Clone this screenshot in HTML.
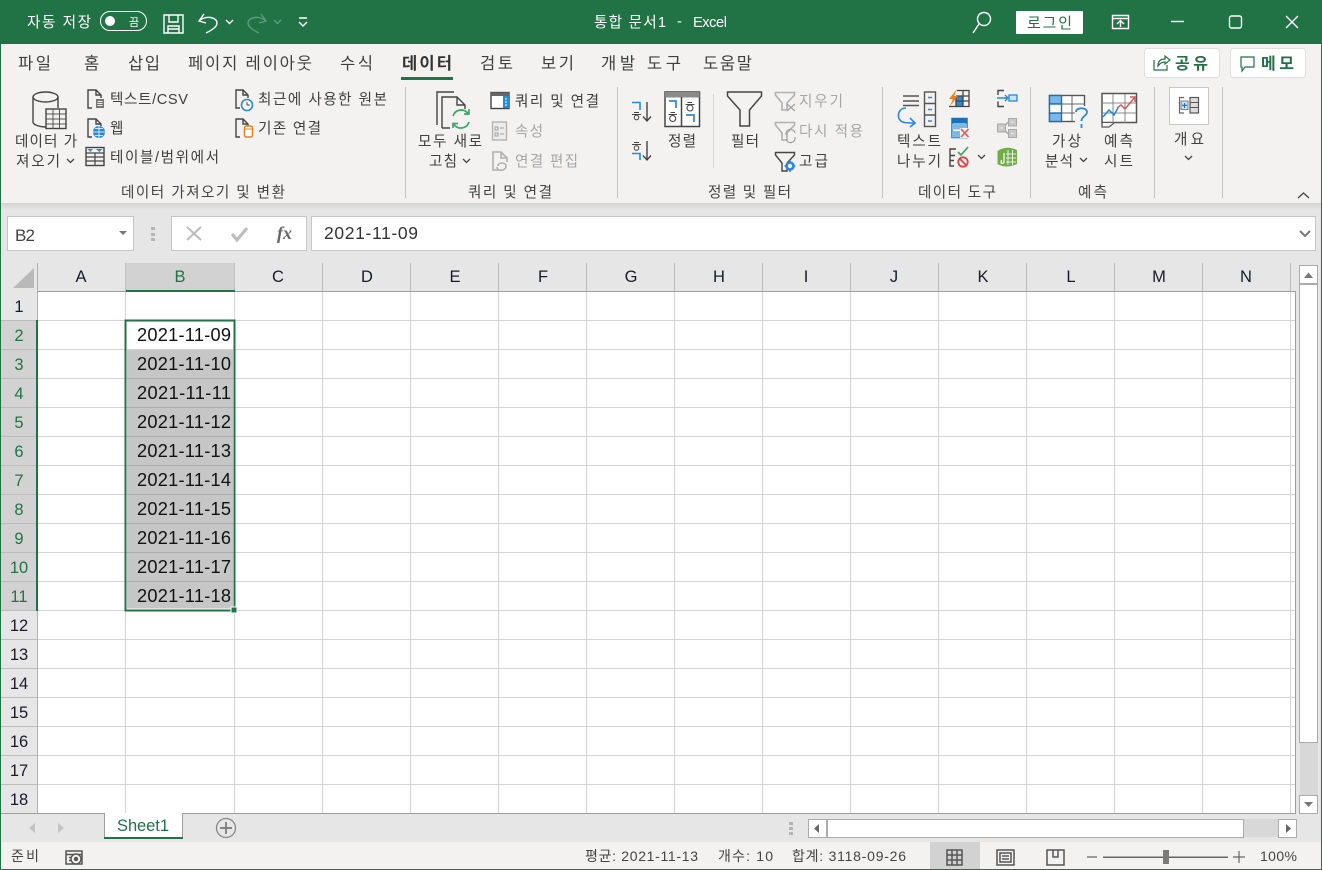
<!DOCTYPE html>
<html lang="ko"><head><meta charset="utf-8"><title>통합 문서1 - Excel</title>
<style>
html,body{margin:0;padding:0;width:1322px;height:870px;overflow:hidden;background:#e6e6e6}
svg{display:block}
text{font-family:"Liberation Sans","Noto Sans CJK KR",sans-serif;font-size:14.6px;fill:#444}
.w text{fill:#fff}
.r text{fill:#404040}
.g text{fill:#a6a6a6}
.gl text{fill:#444;font-size:14.6px}
.tab text{font-size:16.6px;fill:#404040}
.cell text{font-size:18.2px;fill:#111}
.h text{font-size:16.5px;fill:#1a1a2a;text-anchor:middle}
.hs text{font-size:16.5px;fill:#217346;text-anchor:middle}
.s text{font-size:14px;fill:#444}
.i{fill:none;stroke:#444;stroke-width:1.4}
.b{fill:none;stroke:#2b88d8;stroke-width:1.6}
.ig{fill:none;stroke:#b0b0b0;stroke-width:1.6}
</style></head><body>
<svg width="1322" height="870" viewBox="0 0 1322 870" xmlns="http://www.w3.org/2000/svg">
<defs><linearGradient id="sh" x1="0" y1="0" x2="0" y2="1"><stop offset="0" stop-color="#d4d4d4"/><stop offset="1" stop-color="#e6e6e6"/></linearGradient></defs>
<rect width="1322" height="870" fill="#e6e6e6"/>
<!-- title bar -->
<rect width="1322" height="44" fill="#217346"/>
<rect y="44" width="1322" height="159" fill="#f3f2f1"/>
<rect y="203" width="1322" height="7" fill="url(#sh)"/>
<g class="w">
<text x="27" y="27" textLength="64">자동 저장</text>
<text x="129" y="26" style="font-size:11px">끔</text>
<text x="594" y="27" textLength="72">통합 문서1</text>
<text x="677" y="26">-</text>
<text x="693" y="27" textLength="34">Excel</text>
</g>
<rect x="100.500" y="11.500" width="46" height="19" rx="9.500" fill="none" stroke="#fff"/>
<circle cx="110" cy="21" r="5" fill="#fff"/>
<g fill="none" stroke="#fff" stroke-width="1.400">
<path d="M164 15H183V33H164ZM169 15V22H178V15M168 33V26H179V33M168 29H179"/>
<path d="M204 14L199 21L206 23M199 21C206 15 217 17 217 23C217 27 212 30 206 33"/>
<path d="M226 20l3.500 3.500L233 20"/>
<path d="M299 18H307M299 22l4 4 4-4"/>
<circle cx="984" cy="19" r="6.500"/><path d="M979 24L973 33"/>
<path d="M1112.500 15.500H1128.500V28.500H1112.500ZM1112.500 18.500H1128.500M1120.500 27V21M1117 24l3.500-3.500 3.500 3.500"/>
<path d="M1171 21.500H1184"/>
<rect x="1229.500" y="16" width="12" height="12" rx="2"/>
<path d="M1286 16L1298 28M1298 16L1286 28"/>
</g>
<g fill="none" stroke="#5c9b7c" stroke-width="1.400">
<path d="M261 14L266 21L259 23M266 21C259 15 248 17 248 23C248 27 253 30 259 33"/>
<path d="M274 20l3.500 3.500 3.500-3.500"/>
</g>
<rect x="1016" y="11" width="67" height="23" rx="1" fill="#fff"/>
<text x="1027" y="28" textLength="45" style="fill:#217346;font-size:15px">로그인</text>
<!-- tabs -->
<g class="tab">
<text x="18" y="69" textLength="33">파일</text>
<text x="84" y="69" textLength="16">홈</text>
<text x="128" y="69" textLength="32">삽입</text>
<text x="188" y="69" textLength="124">페이지 레이아웃</text>
<text x="340" y="69" textLength="33">수식</text>
<text x="402" y="69" textLength="50" style="font-weight:700;fill:#333">데이터</text>
<text x="480" y="69" textLength="33">검토</text>
<text x="541" y="69" textLength="33">보기</text>
<text x="601" y="69" textLength="80">개발 도구</text>
<text x="703" y="69" textLength="49">도움말</text>
</g>
<rect x="401" y="77" width="52" height="3" fill="#217346"/>
<rect x="1144.500" y="48.500" width="75" height="29" rx="3" fill="#fff" stroke="#e1dfdd"/>
<rect x="1230.500" y="48.500" width="75" height="29" rx="3" fill="#fff" stroke="#e1dfdd"/>
<text x="1175" y="69" textLength="33" style="font-size:16px;font-weight:700;fill:#217346">공유</text>
<text x="1261" y="69" textLength="33" style="font-size:16px;font-weight:700;fill:#217346">메모</text>
<g fill="none" stroke="#217346" stroke-width="1.200">
<path d="M1154 60V70H1167V65M1158 66C1158 61 1161 59 1165 59V56L1170 60L1165 64V62C1162 62 1160 63 1158 66Z"/>
<path d="M1241 57H1254V67H1245L1242 71V67H1241Z"/>
</g>
<!-- ribbon dividers -->
<g fill="#c4c4c4">
<rect x="405" y="87" width="1" height="111"/><rect x="617" y="87" width="1" height="111"/>
<rect x="882" y="87" width="1" height="111"/><rect x="1030" y="87" width="1" height="111"/>
<rect x="1154" y="87" width="1" height="111"/><rect x="1222" y="87" width="1" height="111"/>
<rect x="713" y="94" width="1" height="74" fill="#d6d6d6"/>
</g>
<!-- ribbon text -->
<g class="r">
<text x="15" y="146" textLength="62">데이터 가</text>
<text x="16" y="166" textLength="44">져오기</text>
<text x="110" y="104" textLength="78">텍스트/CSV</text>
<text x="110" y="133" textLength="14">웹</text>
<text x="110" y="162" textLength="109">테이블/범위에서</text>
<text x="258" y="104" textLength="129">최근에 사용한 원본</text>
<text x="258" y="133" textLength="63">기존 연결</text>
<text x="418" y="146" textLength="64">모두 새로</text>
<text x="429" y="166" textLength="28">고침</text>
<text x="515" y="106" textLength="84">쿼리 및 연결</text>
<text x="668" y="146" textLength="28">정렬</text>
<text x="731" y="146" textLength="28">필터</text>
<text x="799" y="166" textLength="29">고급</text>
<text x="897" y="146" textLength="44">텍스트</text>
<text x="897" y="166" textLength="44">나누기</text>
<text x="1052" y="146" textLength="29">가상</text>
<text x="1045" y="166" textLength="28">분석</text>
<text x="1104" y="146" textLength="29">예측</text>
<text x="1104" y="166" textLength="29">시트</text>
<text x="1174" y="144" textLength="30">개요</text>
</g>
<g class="g">
<text x="515" y="136" textLength="28">속성</text>
<text x="515" y="166" textLength="63">연결 편집</text>
<text x="799" y="106" textLength="44">지우기</text>
<text x="799" y="136" textLength="64">다시 적용</text>
</g>
<g class="gl">
<text x="121" y="197" textLength="164">데이터 가져오기 및 변환</text>
<text x="468" y="197" textLength="84">쿼리 및 연결</text>
<text x="708" y="197" textLength="83">정렬 및 필터</text>
<text x="918" y="197" textLength="78">데이터 도구</text>
<text x="1078" y="197" textLength="29">예측</text>
</g>
<!-- chevrons -->
<g fill="none" stroke="#444" stroke-width="1.300">
<path d="M67 159l3.500 3.500 3.500-3.500M463 159l3.500 3.500 3.500-3.500M978 155l3.500 3.500 3.500-3.500M1080 158l3.500 3.500 3.500-3.500M1185 156l3.500 3.500 3.500-3.500"/>
<path d="M1298 198l5.500-5 5.500 5"/>
</g>
<!-- database -->
<g class="i">
<path d="M33 97V122C33 125 40 127 46 127M58 97V108"/>
<ellipse cx="45.500" cy="97" rx="12.500" ry="5"/>
</g>
<rect x="46" y="109" width="20" height="19.500" fill="#f3f2f1" stroke="#444" stroke-width="1.400"/>
<path d="M46 114H66M46 119H66M46 124H66M53 109V128M59.500 109V128" stroke="#555" fill="none"/>
<!-- doc icons -->
<g class="i">
<path d="M92 108H88V90H96L101 95V98M96 90V95H101"/>
<path d="M92 137H88V119H96L101 124V126M96 119V124H101"/>
<path d="M240 108H236V90H243L248 95V98M243 90V95H248"/>
<path d="M240 137H236V119H243L248 124V126M243 119V124H248"/>
</g>
<rect x="96" y="99" width="8" height="9" fill="#777"/>
<path d="M97.500 101.500H102.500M97.500 103.500H102.500M97.500 105.500H102.500" stroke="#eee"/>
<circle cx="99" cy="132" r="6" fill="#2b88d8"/>
<path d="M93 132H105M99 126V138M95 128.500H103M95 135.500H103" stroke="#fff" stroke-width=".8" fill="none"/>
<circle cx="247" cy="105" r="5.500" fill="#fff" stroke="#2b88d8" stroke-width="1.600"/>
<path d="M247 102V105H250" stroke="#444" fill="none"/>
<rect x="244.500" y="126" width="8" height="11" rx="2" fill="#fff" stroke="#e67e22" stroke-width="1.500"/>
<path d="M244.500 129H252.500" stroke="#e67e22"/>
<!-- table -->
<rect x="86" y="147.500" width="18" height="18" fill="#f3f2f1" stroke="#444" stroke-width="1.400"/>
<path d="M87.500 149H93L90.300 152ZM96 149H102.500L99.300 152Z" fill="#2b88d8"/>
<path d="M86 153H104M86 157H104M86 161H104M95 153V165.500" stroke="#444" stroke-width="1.200"/>
<!-- refresh -->
<g class="i">
<path d="M437 125V92H454"/>
<path d="M442 128V97H457L465 105V109M457 97V105H465M442 128H450"/>
</g>
<g fill="none" stroke="#3aa864" stroke-width="1.700">
<path d="M453 116A8.500 8.500 0 0 1 468 113.500M469 122A8.500 8.500 0 0 1 454 124.500"/>
<path d="M469 109V114H464M453 128V123.500H458"/>
</g>
<!-- query panel -->
<rect x="491" y="92.500" width="18" height="16" fill="#fff" stroke="#444" stroke-width="1.400"/>
<rect x="491" y="92.500" width="18" height="3.500" fill="#666"/>
<rect x="503" y="96" width="6" height="12" fill="#2b88d8"/>
<path d="M505 99H507M505 102H507M505 105H507" stroke="#fff"/>
<rect x="492.500" y="122" width="14" height="18" fill="#ececec" stroke="#b0b0b0" stroke-width="1.300"/>
<path d="M495 127H498V130H495ZM495 133H498V136H495ZM500 128H504M500 134H504" stroke="#a0a0a0" fill="none"/>
<g class="ig">
<path d="M498 170H493V152H501L507 158V162M501 152V158H507"/>
<path d="M498 166C498 162 506 162 506 166C506 171 497 172 497 167"/>
</g>
<!-- sort -->
<g fill="none" stroke="#444" stroke-width="1.400">
<path d="M647 102V121M643 116.500L647 121L651 116.500"/>
<path d="M647 141V160M643 155.500L647 160L651 155.500"/>
</g>
<path d="M632 102.500H640V110M632 153.500H640V160" fill="none" stroke="#2b88d8" stroke-width="1.600"/>
<g fill="none" stroke="#444" stroke-width="1">
<path d="M634 112.500H639M632 114.500H641"/><circle cx="636.500" cy="117.500" r="2.300"/>
<path d="M634 142.500H639M632 144.500H641"/><circle cx="636.500" cy="148" r="2.300"/>
</g>
<rect x="665" y="92" width="34.500" height="34.500" fill="#fff" stroke="#444" stroke-width="1.500"/>
<rect x="665" y="92" width="34.500" height="5.500" fill="#8a8a8a"/>
<path d="M681.500 97V126" stroke="#444" stroke-width="1.500"/>
<path d="M669 101H676V108M686 115H694V122" fill="none" stroke="#2b88d8" stroke-width="1.700"/>
<g fill="none" stroke="#444" stroke-width="1.100">
<path d="M670.500 112.500H675M668.500 114.500H677"/><circle cx="672.700" cy="118.500" r="3"/>
<path d="M687.500 102.500H692M685.500 104.500H694.500"/><circle cx="690" cy="108" r="3"/>
</g>
<!-- filters -->
<path d="M727.500 92H761.500V96L749.500 110V126H740V110L727.500 96Z" fill="none" stroke="#444" stroke-width="1.500"/>
<g class="ig">
<path d="M775.500 92.500H794.500V95L787 103V110H782V103L775.500 95Z"/>
<path d="M775.500 122.500H794.500V125L787 133V140H782V133L775.500 125Z"/>
<path d="M787 104L795 111M795 104L787 111" stroke="#a0a0a0" stroke-width="1.200"/>
<path d="M786 135A4.500 4.500 0 0 1 795 133M795 137A4.500 4.500 0 0 1 786 139" stroke="#a0a0a0" stroke-width="1.200"/>
</g>
<path d="M775.500 152.500H794.500V155L787 163V171H782V163L775.500 155Z" fill="#f3f2f1" stroke="#444" stroke-width="1.400"/>
<circle cx="790" cy="166" r="3.500" fill="#f3f2f1" stroke="#2b88d8" stroke-width="2.600"/>
<path d="M790 160V162M790 170V172M784.500 166H786.500M793.500 166H795.500" stroke="#2b88d8" stroke-width="1.600"/>
<!-- text to columns -->
<g fill="none" stroke="#555" stroke-width="1.400">
<path d="M903 96H919M903 101H919M903 105.500H919"/>
<rect x="924.500" y="92" width="11" height="34.500"/>
<path d="M924.500 103.500H935.500M924.500 115H935.500"/>
</g>
<path d="M928 97.500H932M928 109.500H932M928 121H932" stroke="#2b88d8" stroke-width="1.600"/>
<path d="M906 108C898 108 897 117 900 120C902 123 907 123 914 123M910 118L915 123L910 127" class="b"/>
<!-- flash fill etc -->
<rect x="956" y="96" width="7" height="10" fill="#2b88d8"/>
<g fill="none" stroke="#444" stroke-width="1.300">
<path d="M949 106.500H969V90.500H957M963 90.500V106.500M956 101H969M956 96H969M956 96V106.500"/>
</g>
<path d="M957 89L949 99H953L950 106L958 96H954Z" fill="#e67e22"/>
<rect x="952" y="118.500" width="15" height="19" fill="#fff" stroke="#1e6fb5" stroke-width="1.500"/>
<rect x="952" y="118.500" width="15" height="5" fill="#1e6fb5"/>
<rect x="952" y="124" width="15" height="5.500" fill="#7ab8e8"/>
<rect x="952" y="131" width="8" height="6.500" fill="#7ab8e8"/>
<rect x="960" y="128" width="9" height="10" fill="#f3f2f1"/>
<path d="M961 129L968.500 137M968.500 129L961 137" stroke="#e25555" stroke-width="1.600"/>
<path d="M956 149H950V155.500H955M950 155.500V166H954M950 160.500H954" fill="none" stroke="#444" stroke-width="1.400"/>
<path d="M958 152L961 155L968 147" fill="none" stroke="#3aa864" stroke-width="1.700"/>
<circle cx="963" cy="162" r="4.700" fill="#fff" stroke="#e04040" stroke-width="1.800"/>
<path d="M960 159L966 165" stroke="#e04040" stroke-width="1.800"/>
<!-- consolidate -->
<path d="M1004 90.500H998V95M998 101.500V106.500H1004" fill="none" stroke="#444" stroke-width="1.400"/>
<path d="M997 98H1008M1005 95L1008 98L1005 101" fill="none" stroke="#2b88d8" stroke-width="1.400"/>
<rect x="1009" y="95" width="8" height="6" fill="#cde3f5" stroke="#2b88d8" stroke-width="1.300"/>
<path d="M1005 126L1008 122M1005 130L1008 134" fill="none" stroke="#aaa" stroke-width="1.400"/>
<rect x="997.500" y="124" width="8" height="8" fill="#c8c8c8" stroke="#a8a8a8"/><rect x="1008.500" y="118.500" width="8" height="7.500" fill="#c8c8c8" stroke="#a8a8a8"/><rect x="1008.500" y="129.500" width="8" height="8" fill="#c8c8c8" stroke="#a8a8a8"/>
<path d="M1000 128H1003M1011 122H1014M1011 133.500H1014" stroke="#eee"/>
<path d="M997.500 151Q1006 145 1017 150V164Q1006 169 997.500 164Z" fill="#70ad47"/>
<path d="M1008 150V165M1012.500 150V165M1006 154H1016M1006 158H1016M1006 162H1016" stroke="#e8f3df" fill="none"/>
<path d="M1004 153V162M1004 162A1.500 1.500 0 1 1 1002 160.500" stroke="#fff" stroke-width="1.200" fill="none"/>
<!-- what-if -->
<rect x="1049.500" y="95.500" width="35" height="26" fill="#fff" stroke="#555" stroke-width="1.400"/>
<rect x="1049.500" y="95.500" width="12" height="8.500" fill="#7ab8e8" stroke="#1e6fb5" stroke-width="1.400"/>
<rect x="1049.500" y="113" width="12" height="8.500" fill="#7ab8e8" stroke="#1e6fb5" stroke-width="1.400"/>
<rect x="1049.500" y="104" width="12" height="9" fill="#fff" stroke="#1e6fb5" stroke-width="1.400"/>
<path d="M1072 95.500V121.500M1061.500 104H1084.500M1061.500 113H1084.500" stroke="#666" fill="none"/>
<rect x="1075" y="106" width="13" height="23" fill="#f3f2f1"/>
<path d="M1076 112C1076 107 1087 107 1087 112C1087 116 1081.500 116 1081.500 121M1081.500 124V128" fill="none" stroke="#2b88d8" stroke-width="1.800"/>
<!-- forecast -->
<rect x="1102" y="93.500" width="34.500" height="29" fill="#fff" stroke="#555" stroke-width="1.500"/>
<path d="M1102 103H1136M1102 113H1136M1113 94V123M1125 94V123" stroke="#888"/>
<path d="M1117 108L1121 105L1125 109L1135 97M1130 97H1135V102" fill="none" stroke="#e25555" stroke-width="1.500"/>
<path d="M1103 117L1109 110L1114 115L1118 108" fill="none" stroke="#2b88d8" stroke-width="1.600"/>
<path d="M1102 123V127H1109L1114 123" fill="#fff" stroke="#555" stroke-width="1.300"/>
<!-- outline button -->
<rect x="1169.500" y="87.500" width="39" height="37" fill="#fff" stroke="#c8c8c8"/>
<path d="M1184 97.500H1179.500V113H1184" fill="none" stroke="#666" stroke-width="1.200"/>
<rect x="1181" y="101" width="7" height="8.500" fill="#cde3f5" stroke="#666" stroke-width=".8"/>
<path d="M1184.500 103V108M1182 105.300H1187" stroke="#1e6fb5" stroke-width="1.200"/>
<rect x="1190" y="97.500" width="8.500" height="15.500" fill="#ddd" stroke="#555" stroke-width="1.200"/>
<path d="M1190 102.500H1198.500M1190 107.500H1198.500" stroke="#555"/>
<!-- formula bar -->
<rect x="7.500" y="216.500" width="126" height="34" fill="#fff" stroke="#c6c6c6"/>
<rect x="171.500" y="216.500" width="135" height="34" fill="#fff" stroke="#c6c6c6"/>
<rect x="311.500" y="216.500" width="1004" height="34" fill="#fff" stroke="#c6c6c6"/>
<text x="15" y="241" textLength="20" style="font-size:17px">B2</text>
<path d="M119 231H127L123 235Z" fill="#777"/>
<path d="M151 227H155V230H151ZM151 233H155V236H151ZM151 238H155V241H151Z" fill="#b5b5b5"/>
<path d="M187 227L201 240M201 227L187 240" stroke="#bdbdbd" stroke-width="2" fill="none"/>
<path d="M232 234L237 240L247 228" stroke="#bdbdbd" stroke-width="3" fill="none"/>
<text x="277" y="239" style="font-family:'Liberation Serif',serif;font-style:italic;font-weight:700;font-size:18px;fill:#666">fx</text>
<text x="324" y="239" textLength="94" style="font-size:17.500px;fill:#333">2021-11-09</text>
<path d="M1300 231L1305 236L1310 231" fill="none" stroke="#777" stroke-width="2"/>
<!-- sheet -->
<rect x="37" y="292" width="1258" height="521" fill="#fff"/>
<rect x="126" y="263" width="109" height="28" fill="#d2d2d2"/>
<rect x="1" y="321" width="36" height="290" fill="#d2d2d2"/>
<path d="M34 268V288H13Z" fill="#b9b9b9"/>
<g fill="#d4d4d4">
<rect x="125" y="292" width="1" height="521"/><rect x="234" y="292" width="1" height="521"/><rect x="322" y="292" width="1" height="521"/><rect x="410" y="292" width="1" height="521"/><rect x="498" y="292" width="1" height="521"/><rect x="586" y="292" width="1" height="521"/><rect x="674" y="292" width="1" height="521"/><rect x="762" y="292" width="1" height="521"/><rect x="850" y="292" width="1" height="521"/><rect x="938" y="292" width="1" height="521"/><rect x="1026" y="292" width="1" height="521"/><rect x="1114" y="292" width="1" height="521"/><rect x="1202" y="292" width="1" height="521"/><rect x="1290" y="292" width="1" height="521"/>
<rect x="37" y="320" width="1258" height="1"/><rect x="37" y="349" width="1258" height="1"/><rect x="37" y="378" width="1258" height="1"/><rect x="37" y="407" width="1258" height="1"/><rect x="37" y="436" width="1258" height="1"/><rect x="37" y="465" width="1258" height="1"/><rect x="37" y="494" width="1258" height="1"/><rect x="37" y="523" width="1258" height="1"/><rect x="37" y="552" width="1258" height="1"/><rect x="37" y="581" width="1258" height="1"/><rect x="37" y="610" width="1258" height="1"/><rect x="37" y="639" width="1258" height="1"/><rect x="37" y="668" width="1258" height="1"/><rect x="37" y="697" width="1258" height="1"/><rect x="37" y="726" width="1258" height="1"/><rect x="37" y="755" width="1258" height="1"/><rect x="37" y="784" width="1258" height="1"/>
</g>
<g fill="#bdbdbd">
<rect x="37" y="263" width="1" height="28"/><rect x="125" y="263" width="1" height="28"/><rect x="234" y="263" width="1" height="28"/><rect x="322" y="263" width="1" height="28"/><rect x="410" y="263" width="1" height="28"/><rect x="498" y="263" width="1" height="28"/><rect x="586" y="263" width="1" height="28"/><rect x="674" y="263" width="1" height="28"/><rect x="762" y="263" width="1" height="28"/><rect x="850" y="263" width="1" height="28"/><rect x="938" y="263" width="1" height="28"/><rect x="1026" y="263" width="1" height="28"/><rect x="1114" y="263" width="1" height="28"/><rect x="1202" y="263" width="1" height="28"/><rect x="1290" y="263" width="1" height="28"/>
<rect x="1" y="320" width="36" height="1"/><rect x="1" y="349" width="36" height="1"/><rect x="1" y="378" width="36" height="1"/><rect x="1" y="407" width="36" height="1"/><rect x="1" y="436" width="36" height="1"/><rect x="1" y="465" width="36" height="1"/><rect x="1" y="494" width="36" height="1"/><rect x="1" y="523" width="36" height="1"/><rect x="1" y="552" width="36" height="1"/><rect x="1" y="581" width="36" height="1"/><rect x="1" y="610" width="36" height="1"/><rect x="1" y="639" width="36" height="1"/><rect x="1" y="668" width="36" height="1"/><rect x="1" y="697" width="36" height="1"/><rect x="1" y="726" width="36" height="1"/><rect x="1" y="755" width="36" height="1"/><rect x="1" y="784" width="36" height="1"/>
</g>
<rect x="37" y="291" width="1259" height="1" fill="#9f9f9f"/>
<rect x="37" y="263" width="1" height="550" fill="#b1b1b1"/>
<rect x="1295" y="291" width="1" height="522" fill="#9f9f9f"/>
<rect x="0" y="813" width="1296" height="1" fill="#9f9f9f"/>
<rect x="126" y="290" width="109" height="2" fill="#217346"/>
<rect x="36" y="320" width="2" height="291" fill="#217346"/>
<!-- selection -->
<rect x="127" y="350" width="106" height="258.500" fill="#c6c6c6"/>
<path d="M127 378.500H233M127 407.500H233M127 436.500H233M127 465.500H233M127 494.500H233M127 523.500H233M127 552.500H233M127 581.500H233" stroke="#adadad"/>
<rect x="125.500" y="320.500" width="109" height="290" fill="none" stroke="#217346" stroke-width="2"/>
<rect x="231" y="607" width="6" height="6" fill="#217346" stroke="#fff"/>
<g class="h">
<text x="81" y="282">A</text><text x="278" y="282">C</text><text x="367" y="282">D</text><text x="455" y="282">E</text><text x="543" y="282">F</text><text x="631" y="282">G</text><text x="719" y="282">H</text><text x="806" y="282">I</text><text x="894" y="282">J</text><text x="983" y="282">K</text><text x="1071" y="282">L</text><text x="1159" y="282">M</text><text x="1246" y="282">N</text>
<text x="19" y="312">1</text><text x="19" y="631">12</text><text x="19" y="660">13</text><text x="19" y="689">14</text><text x="19" y="718">15</text><text x="19" y="747">16</text><text x="19" y="776">17</text><text x="19" y="805">18</text>
</g>
<g class="hs">
<text x="180" y="282">B</text>
<text x="19" y="341">2</text><text x="19" y="370">3</text><text x="19" y="399">4</text><text x="19" y="428">5</text><text x="19" y="457">6</text><text x="19" y="486">7</text><text x="19" y="515">8</text><text x="19" y="544">9</text><text x="19" y="573">10</text><text x="19" y="602">11</text>
</g>
<g class="cell">
<text x="137" y="341" textLength="94">2021-11-09</text>
<text x="137" y="370" textLength="94">2021-11-10</text>
<text x="137" y="399" textLength="94">2021-11-11</text>
<text x="137" y="428" textLength="94">2021-11-12</text>
<text x="137" y="457" textLength="94">2021-11-13</text>
<text x="137" y="486" textLength="94">2021-11-14</text>
<text x="137" y="515" textLength="94">2021-11-15</text>
<text x="137" y="544" textLength="94">2021-11-16</text>
<text x="137" y="573" textLength="94">2021-11-17</text>
<text x="137" y="602" textLength="94">2021-11-18</text>
</g>
<!-- v scrollbar -->
<rect x="1296" y="263" width="25" height="551" fill="#e6e6e6"/>
<rect x="1300" y="743" width="18" height="53" fill="#d8d8d8"/>
<rect x="1299.500" y="265.500" width="18" height="18" fill="#fff" stroke="#ababab"/>
<rect x="1299.500" y="284.500" width="18" height="458" fill="#fff" stroke="#ababab"/>
<rect x="1299.500" y="795.500" width="18" height="18" fill="#fff" stroke="#ababab"/>
<path d="M1304 278L1308.500 272.500L1313 278Z" fill="#777"/>
<path d="M1304 802H1313L1308.500 807Z" fill="#777"/>
<!-- sheet tabs -->
<rect x="0" y="814" width="1322" height="28" fill="#e6e6e6"/>
<rect x="104" y="813" width="79" height="25" fill="#fff"/>
<path d="M104.500 813V838M182.500 813V838" stroke="#9f9f9f"/>
<rect x="104" y="837" width="79" height="2" fill="#217346"/>
<text x="117" y="831" textLength="52" style="font-size:16.500px;fill:#217346">Sheet1</text>
<path d="M35 823V833L29 828Z" fill="#c4c4c4"/><path d="M58 823V833L64 828Z" fill="#c4c4c4"/>
<circle cx="226" cy="828" r="9.500" fill="none" stroke="#888" stroke-width="1.300"/>
<path d="M226 822V834M220 828H232" stroke="#777" stroke-width="1.700"/>
<path d="M789 822H793V825H789ZM789 827H793V830H789ZM789 832H793V835H789Z" fill="#b5b5b5"/>
<rect x="1243" y="819" width="36" height="18" fill="#d8d8d8"/>
<rect x="808.500" y="819.500" width="18" height="18" fill="#fff" stroke="#ababab"/>
<rect x="827.500" y="819.500" width="416" height="18" fill="#fff" stroke="#ababab"/>
<rect x="1278.500" y="819.500" width="18" height="18" fill="#fff" stroke="#ababab"/>
<path d="M819 824V833L814 828.500Z" fill="#666"/><path d="M1286 824V833L1291 828.500Z" fill="#666"/>
<!-- status bar -->
<rect x="0" y="842" width="1322" height="27" fill="#f3f2f1"/>
<rect x="930" y="842" width="50" height="27" fill="#d2d2d2"/>
<g class="s">
<text x="11" y="861" textLength="28">준비</text>
<text x="585" y="861" textLength="113">평균: 2021-11-13</text>
<text x="718" y="861" textLength="55">개수: 10</text>
<text x="792" y="861" textLength="114">합계: 3118-09-26</text>
<text x="1260" y="861" textLength="37">100%</text>
</g>
<g fill="none" stroke="#555" stroke-width="1.500">
<path d="M66 851H82V864H66ZM66 854.500H82M69 857.500H71M69 860.500H71"/>
<path d="M947 850H962V865H947ZM947 855H962M947 860H962M952 850V865M957 850V865"/>
<path d="M997 850H1014V865H997ZM1000 853H1011V862H1000ZM1002 856H1009M1002 859H1009"/>
<path d="M1047 850H1064V865H1047ZM1053 850V857H1058V850"/>
</g>
<path d="M1087 857H1097M1233 857H1245M1239 851V863" stroke="#666" stroke-width="1.200" fill="none"/>
<circle cx="76" cy="859" r="5" fill="#f3f2f1" stroke="#555" stroke-width="1.400"/><circle cx="76" cy="859" r="2.200" fill="#555"/>
<rect x="1103" y="856.500" width="125" height="1.500" fill="#666"/>
<rect x="1163" y="850" width="6" height="14" fill="#7a7a7a"/>
<!-- window border -->
<rect x="0" y="44" width="1" height="826" fill="#217346"/>
<rect x="1321" y="44" width="1" height="826" fill="#217346"/>
<rect x="0" y="869" width="1322" height="1" fill="#217346"/>
</svg>
</body></html>
